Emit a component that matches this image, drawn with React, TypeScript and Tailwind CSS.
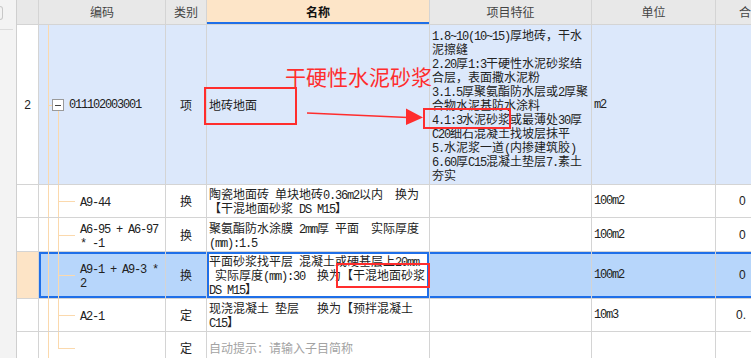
import React from 'react';

const COLS = 'grid grid-cols-[22px_127px_41px_223px_162px_124px_52px]';
const CELL = 'flex items-center overflow-hidden border-r border-b border-[#d4d4d4]';
const TREE = 'bg-[#fbd9ad]';
const SEL = 'bg-[#b7d6fb] shadow-[inset_0_2px_0_#1f6fe8,inset_0_-2px_0_#1f6fe8]';

// ascii runs get a narrow mono face so they sit at half the width of a CJK glyph
function Txt({ s }: { s: string }) {
  const parts = s.split(/([\x20-\x7e]+)/);
  return (
    <>
      {parts.map((p, i) =>
        /^[\x20-\x7e]+$/.test(p) ? (
          <span key={i} className="font-['Liberation_Mono',monospace] text-[12px] tracking-[-1.2px]">
            {p}
          </span>
        ) : (
          <React.Fragment key={i}>{p}</React.Fragment>
        )
      )}
    </>
  );
}

function Lines({ lines, className = '' }: { lines: string[]; className?: string }) {
  return (
    <div className={className}>
      {lines.map((l, i) => (
        <div key={i} className="whitespace-pre h-[14px]">
          <Txt s={l} />
        </div>
      ))}
    </div>
  );
}

function ChildCode({ code, last }: { code: string[]; last?: boolean }) {
  return (
    <div className="relative h-full w-full flex items-center pl-[41px]">
      <span className={`absolute left-[9px] top-0 bottom-0 w-px ${TREE}`} />
      <span className={`absolute left-[19px] top-0 w-px ${TREE} ${last ? 'h-1/2' : 'bottom-0'}`} />
      <span className={`absolute left-[19px] top-1/2 w-[17px] h-px ${TREE}`} />
      <Lines lines={code} />
    </div>
  );
}

const features = [
  '1.8~10(10~15)厚地砖，干水',
  '泥擦缝',
  '2.20厚1:3干硬性水泥砂浆结',
  '合层，表面撒水泥粉',
  '3.1.5厚聚氨酯防水层或2厚聚',
  '合物水泥基防水涂料',
  '4.1:3水泥砂浆或最薄处30厚',
  'C20细石混凝土找坡层抹平',
  '5.水泥浆一道(内掺建筑胶)',
  '6.60厚C15混凝土垫层7.素土',
  '夯实',
];

type Row = {
  code: string[];
  type: string;
  name: string[];
  unit: string;
  qty: string;
  qtyPad: string;
  h: string;
  last?: boolean;
  selected?: boolean;
  hint?: boolean;
};

const rows: Row[] = [
  { code: ['A9-44'], type: '换', name: ['陶瓷地面砖 单块地砖0.36m2以内  换为', '【干混地面砂浆 DS M15】'], unit: '100m2', qty: '0', qtyPad: 'pl-[23px]', h: 'h-[33px]' },
  { code: ['A6-95 + A6-97', '* -1'], type: '换', name: ['聚氨酯防水涂膜 2mm厚 平面  实际厚度', '(mm):1.5'], unit: '100m2', qty: '0', qtyPad: 'pl-[23px]', h: 'h-[34px]' },
  { code: ['A9-1 + A9-3 *', '2'], type: '换', name: ['平面砂浆找平层 混凝土或硬基层上20mm', ' 实际厚度(mm):30  换为【干混地面砂浆', 'DS M15】'], unit: '100m2', qty: '0', qtyPad: 'pl-[23px]', h: 'h-[47px]', selected: true },
  { code: ['A2-1'], type: '定', name: ['现浇混凝土 垫层   换为【预拌混凝土', 'C15】'], unit: '10m3', qty: '0.', qtyPad: 'pl-[20px]', h: 'h-[33px]' },
  { code: [''], type: '定', name: ['自动提示：请输入子目简称'], unit: '', qty: '', qtyPad: '', h: 'h-[33px]', last: true, hint: true },
];

export default function App() {
  return (
    <div className="relative w-[751px] h-[358px] overflow-hidden bg-white flex font-['Noto_Sans_CJK_SC',sans-serif] text-[12px] leading-[14px] text-[#222]">
      {/* left dock strip */}
      <div className="w-[17px] shrink-0 bg-[#f3f3f3] border-r border-[#cfcfcf] flex flex-col">
        <div className="mt-[6px] w-[3px] h-[14px] border border-l-0 border-[#c8c8c8] rounded-r-[3px]" />
        <div className="mt-[9px] w-[13px] h-px bg-[#dcdcdc]" />
      </div>

      <div className="shrink-0">
        {/* header */}
        <div className={`${COLS} h-[25px] text-[#444]`}>
          <div className={`${CELL} bg-[#e8e8e8] border-[#c9c9c9]`} />
          <div className={`${CELL} justify-center bg-[#e8e8e8] border-[#c9c9c9]`}>编码</div>
          <div className={`${CELL} justify-center bg-[#e8e8e8] border-[#c9c9c9]`}>类别</div>
          <div className={`${CELL} justify-center bg-[#fde5c8] border-[#c9c9c9] font-bold text-[#111] shadow-[inset_0_-2px_0_#1f6fe8]`}>名称</div>
          <div className={`${CELL} justify-center bg-[#e8e8e8] border-[#c9c9c9]`}>项目特征</div>
          <div className={`${CELL} justify-center bg-[#e8e8e8] border-[#c9c9c9]`}>单位</div>
          <div className={`${CELL} bg-[#e8e8e8] border-[#c9c9c9] pl-[23px]`}>合计</div>
        </div>

        {/* parent item */}
        <div className={`${COLS} h-[160px]`}>
          <div className={`${CELL} justify-center bg-white font-['Liberation_Sans',sans-serif]`}>2</div>
          <div className={`${CELL} bg-[#dce8fb]`}>
            <div className="relative h-full w-full flex items-center pl-[30px]">
              <span className={`absolute left-[9px] top-0 bottom-0 w-px ${TREE}`} />
              <span className={`absolute left-[9px] top-1/2 w-[4px] h-px ${TREE}`} />
              <span className={`absolute left-[19px] top-[86px] bottom-0 w-px ${TREE}`} />
              <span className="absolute left-[13px] top-[74px] w-[12px] h-[12px] border border-[#9a9a9a] bg-white flex items-center justify-center">
                <span className="w-[6px] h-px bg-[#444]" />
              </span>
              <Txt s="011102003001" />
            </div>
          </div>
          <div className={`${CELL} justify-center bg-[#dce8fb]`}>项</div>
          <div className={`${CELL} bg-[#dce8fb] pl-[2px]`}>地砖地面</div>
          <div className={`${CELL} items-start bg-[#dce8fb] pl-[2px] pt-[3px]`}>
            <Lines lines={features} />
          </div>
          <div className={`${CELL} bg-[#dce8fb] pl-[2px]`}>
            <Txt s="m2" />
          </div>
          <div className={`${CELL} bg-[#dce8fb]`} />
        </div>

        {rows.map((r, i) => (
          <div key={i} className={`${COLS} ${r.h}`}>
            <div className={`${CELL} ${r.selected ? 'bg-[#fde4c6]' : 'bg-white'}`} />
            <div className={`${CELL} ${r.selected ? `${SEL} shadow-[inset_2px_0_0_#1f6fe8,inset_0_2px_0_#1f6fe8,inset_0_-2px_0_#1f6fe8]` : ''}`}>
              <ChildCode code={r.code} last={r.last} />
            </div>
            <div className={`${CELL} justify-center ${r.selected ? SEL : ''}`}>{r.type}</div>
            <div className={`${CELL} pl-[2px] ${r.selected ? 'bg-white shadow-[inset_0_0_0_2px_#1f6fe8]' : ''} ${r.hint ? 'text-[#a3a3a3]' : ''}`}>
              <Lines lines={r.name} />
            </div>
            <div className={`${CELL} ${r.selected ? SEL : ''}`} />
            <div className={`${CELL} pl-[2px] ${r.selected ? SEL : ''}`}>
              <Txt s={r.unit} />
            </div>
            <div className={`${CELL} ${r.qtyPad} ${r.selected ? SEL : ''} font-['Liberation_Sans',sans-serif]`}>{r.qty}</div>
          </div>
        ))}
      </div>

      {/* red markup drawn over the grid */}
      <div className="absolute left-[204px] top-[87px] w-[93px] h-[38px] border-2 border-[#ff2d2d]" />
      <div className="absolute left-[285px] top-[64px] text-[21px] leading-[24px] text-[#ff2d2d] whitespace-nowrap">干硬性水泥砂浆</div>
      <svg className="absolute left-0 top-0" width="751" height="358">
        <line x1="307" y1="113" x2="408" y2="117.5" stroke="#ff2d2d" strokeWidth="1.6" />
        <polygon points="406,108.5 423,117.5 406,125" fill="#ff2d2d" />
      </svg>
      <div className="absolute left-[423px] top-[108px] w-[88px] h-[21px] border-2 border-[#ff2d2d]" />
      <div className="absolute left-[336px] top-[263px] w-[94px] h-[25px] border-2 border-[#ff2d2d]" />
    </div>
  );
}
